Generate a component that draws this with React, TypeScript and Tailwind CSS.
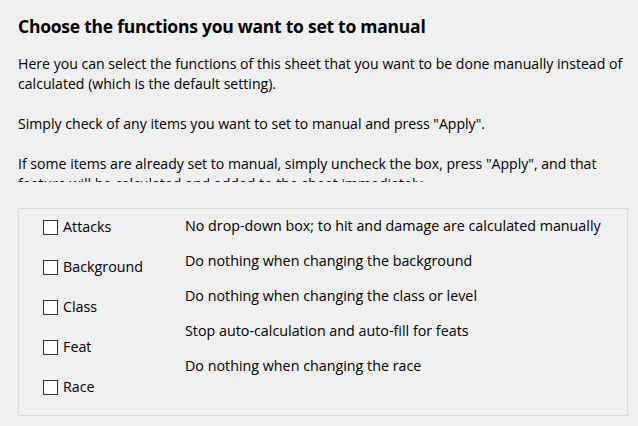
import React from "react";

const items = [
  { label: "Attacks", desc: "No drop-down box; to hit and damage are calculated manually" },
  { label: "Background", desc: "Do nothing when changing the background" },
  { label: "Class", desc: "Do nothing when changing the class or level" },
  { label: "Feat", desc: "Stop auto-calculation and auto-fill for feats" },
  { label: "Race", desc: "Do nothing when changing the race" },
];

export default function App() {
  return (
    <div
      className="w-[638px] h-[426px] bg-[#f0f0f0] text-[#000] overflow-hidden pl-[18px] flex flex-col"
      style={{ fontFamily: '"Open Sans", "Noto Sans", sans-serif' }}
    >
      <h1 className="text-[17.5px] font-bold leading-[24px] mt-[14px] tracking-[-0.25px]">
        Choose the functions you want to set to manual
      </h1>
      <div className="w-[614px] h-[144px] overflow-hidden text-[14.1px] leading-[20px] pt-[16px] flex flex-col gap-[20px]">
        <p>
          Here you can select the functions of this sheet that you want to be done manually instead of calculated
          (which is the default setting).
        </p>
        <p>Simply check of any items you want to set to manual and press "Apply".</p>
        <p className="pr-[16px]">
          If some items are already set to manual, simply uncheck the box, press "Apply", and that feature will be
          calculated and added to the sheet immediately.
        </p>
      </div>
      <div className="mt-[26px] h-[208px] w-[610px] border border-[#dadada] flex text-[14.3px] leading-[20px]">
        <div className="pl-[24px] pt-[8px] flex flex-col gap-[20px] w-[166px]">
          {items.map((it) => (
            <label key={it.label} className="flex items-center h-[20px]">
              <span className="w-[15px] h-[15px] border border-[#333] bg-white shrink-0" />
              <span className="ml-[5px]">{it.label}</span>
            </label>
          ))}
        </div>
        <div className="pt-[7px] flex flex-col gap-[15px]">
          {items.map((it) => (
            <div key={it.label} className="h-[20px] whitespace-nowrap">
              {it.desc}
            </div>
          ))}
        </div>
      </div>
    </div>
  );
}
